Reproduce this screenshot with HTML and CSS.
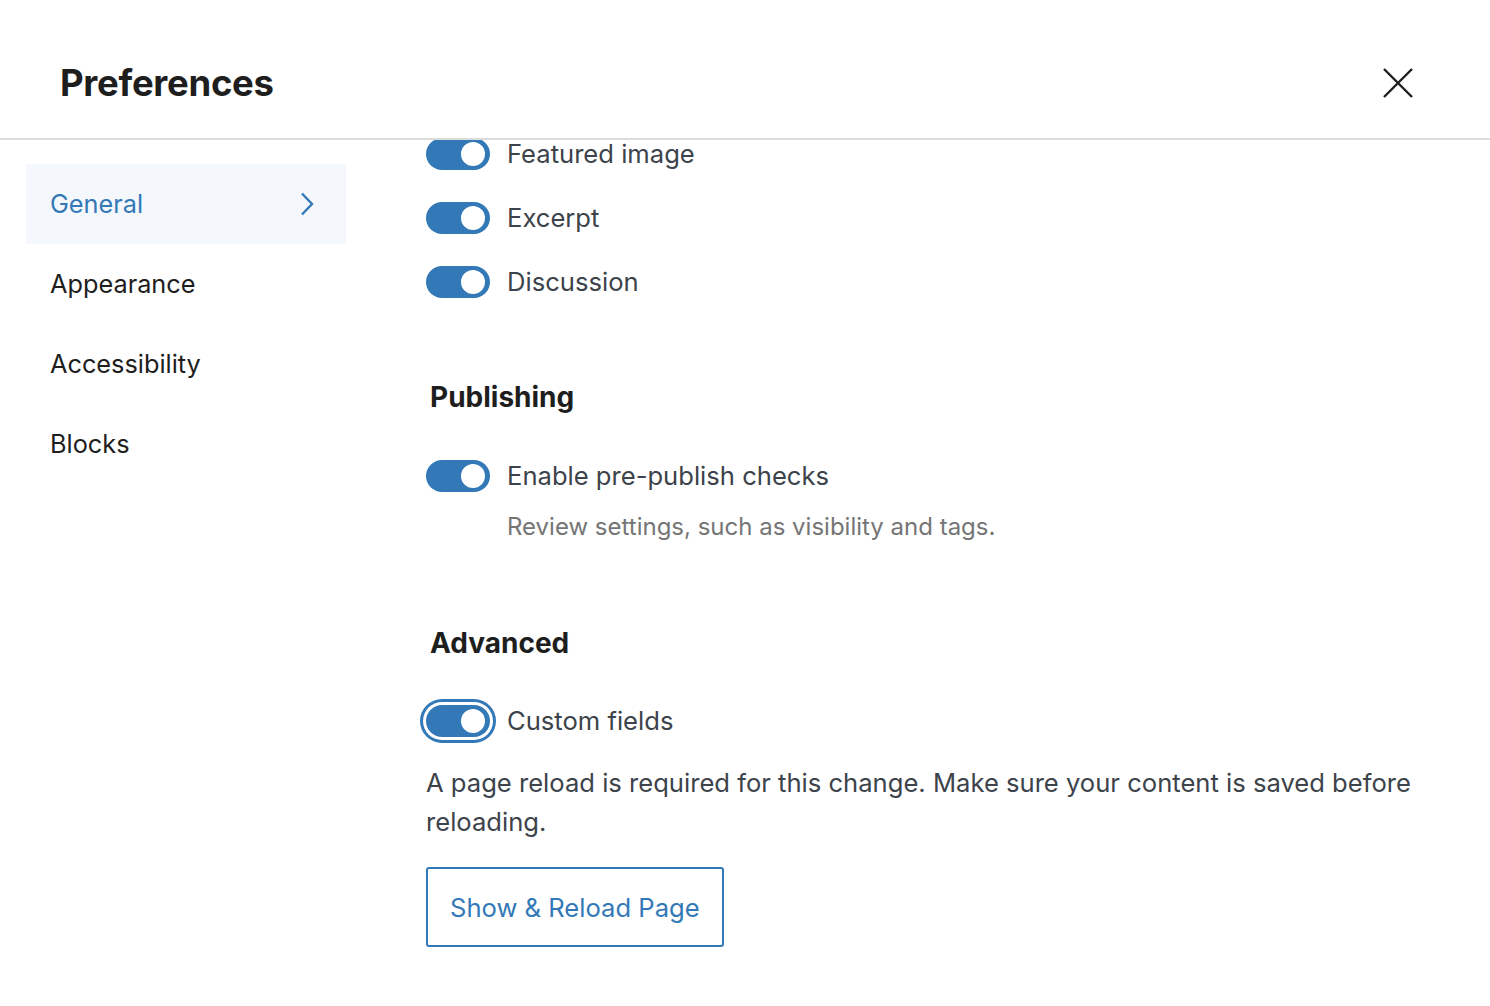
FILE: index.html
```html
<!DOCTYPE html>
<html lang="en">
<head>
<meta charset="utf-8">
<title>Preferences</title>
<link rel="stylesheet" href="styles.css">
</head>
<body>
<div class="modal">
  <header class="modal-header">
    <h1 class="modal-title">Preferences</h1>
    <button class="close-btn" aria-label="Close">
      <svg width="30" height="30" viewBox="0 0 30 30"><path d="M1 1 L29 29 M29 1 L1 29" stroke="#1e1e1e" stroke-width="2.4" fill="none"/></svg>
    </button>
  </header>
  <div class="modal-body">
    <nav class="sidebar">
      <a class="nav-item active">General
        <svg class="chev" width="14" height="24" viewBox="0 0 14 24"><path d="M2 1.5 L12 12 L2 22.5" stroke="#3379b7" stroke-width="2.4" fill="none"/></svg>
      </a>
      <a class="nav-item">Appearance</a>
      <a class="nav-item">Accessibility</a>
      <a class="nav-item">Blocks</a>
    </nav>
    <main class="content">
      <div class="rows">
        <div class="row"><span class="toggle"></span><span class="label">Featured image</span></div>
        <div class="row"><span class="toggle"></span><span class="label">Excerpt</span></div>
        <div class="row"><span class="toggle"></span><span class="label">Discussion</span></div>
      </div>
      <h2 class="section-title publishing">Publishing</h2>
      <div class="row"><span class="toggle"></span><span class="label">Enable pre-publish checks</span></div>
      <p class="help">Review settings, such as visibility and tags.</p>
      <h2 class="section-title advanced">Advanced</h2>
      <div class="row"><span class="toggle focused"></span><span class="label">Custom fields</span></div>
      <p class="note">A page reload is required for this change. Make sure your content is saved before reloading.</p>
      <button class="reload-btn">Show &amp; Reload Page</button>
    </main>
  </div>
</div>
</body>
</html>
```
FILE: styles.css
```css
* { box-sizing: border-box; }
html, body { margin: 0; padding: 0; background: #fff; }
body {
  font-family: Inter, "Noto Sans", "Liberation Sans", sans-serif;
  color: #1e1e1e;
  width: 1490px;
  height: 1006px;
  overflow: hidden;
}
.modal { display: flex; flex-direction: column; height: 1006px; }
.modal-header {
  height: 140px;
  flex: 0 0 140px;
  border-bottom: 2px solid #dcdcdc;
  display: flex;
  align-items: center;
  justify-content: space-between;
  padding: 28px 77px 0 60px;
  position: relative;
  z-index: 2;
  background: #fff;
}
.modal-title {
  margin: 0;
  font-size: 36.5px;
  font-weight: 700;
  letter-spacing: -0.3px;
  line-height: 46px;
}
.close-btn {
  border: 0;
  background: none;
  padding: 0;
  width: 30px;
  height: 30px;
  display: block;
}
.close-btn svg { display: block; }
.modal-body { display: flex; flex: 1; }
.sidebar {
  width: 346px;
  flex: 0 0 346px;
  padding: 24px 0 0 26px;
  display: flex;
  flex-direction: column;
}
.nav-item {
  height: 80px;
  display: flex;
  align-items: center;
  justify-content: space-between;
  padding: 0 32px 0 24px;
  font-size: 25.3px;
  line-height: 30px;
  padding-bottom: 1px;
  color: #1e1e1e;
  border-radius: 4px;
}
.nav-item.active { background: #f4f7fb; color: #3379b7; }
.chev { display: block; }
.content { flex: 1; padding-left: 80px; padding-right: 60px; }
.rows { margin-top: -2px; display: flex; flex-direction: column; gap: 32px; }
.row { display: flex; align-items: center; height: 32px; }
.toggle {
  width: 64px;
  height: 32px;
  border-radius: 16px;
  background: #3379b7;
  position: relative;
  flex: 0 0 64px;
  margin-right: 17px;
}
.toggle::after {
  content: "";
  position: absolute;
  right: 5px;
  top: 4px;
  width: 24px;
  height: 24px;
  border-radius: 50%;
  background: #fff;
}
.toggle.focused { box-shadow: 0 0 0 3px #fff, 0 0 0 6px #3379b7; }
.label {
  font-size: 25.6px;
  color: #3c434a;
  line-height: 24px;
  position: relative;
  z-index: 3;
}
.section-title {
  margin: 0;
  font-size: 28px;
  font-weight: 700;
  line-height: 40px;
  padding-left: 4px;
  color: #1e1e1e;
}
.publishing { margin-top: 79px; margin-bottom: 43px; }
.advanced { margin-top: 80px; margin-bottom: 42px; }
.help {
  margin: 19px 0 0 81px;
  font-size: 24px;
  line-height: 32px;
  color: #757575;
}
.note {
  margin: 26px 0 0 0;
  font-size: 25.6px;
  line-height: 39px;
  color: #3c434a;
  width: 1004px;
}
.reload-btn {
  margin-top: 26px;
  height: 80px;
  padding: 0 22px;
  border: 2px solid #3379b7;
  border-radius: 3px;
  background: #fff;
  color: #3379b7;
  font-family: inherit;
  font-size: 25.6px;
  display: block;
}
```
